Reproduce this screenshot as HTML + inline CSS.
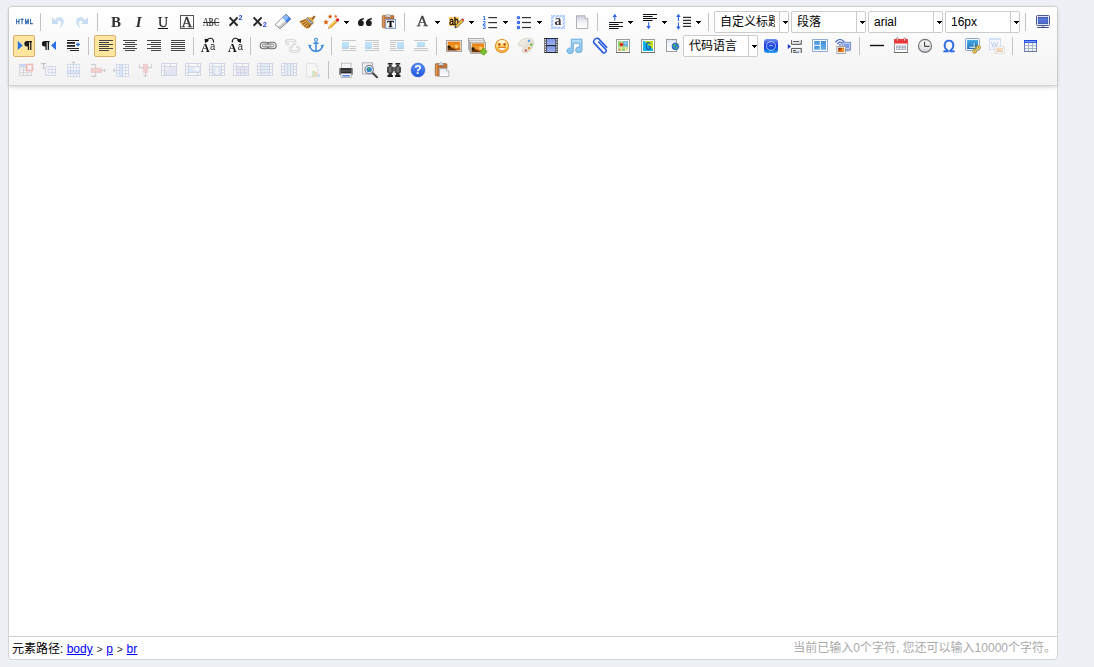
<!DOCTYPE html>
<html lang="zh-CN">
<head>
<meta charset="utf-8">
<title>UEditor</title>
<style>
html,body{margin:0;padding:0;}
body{background:#edf0f5;font-family:"Liberation Sans","Noto Sans CJK SC",sans-serif;font-size:12px;width:1094px;height:667px;overflow:hidden;position:relative;}
#ed{position:absolute;left:8px;top:6px;width:1048px;border:1px solid #d4d4d4;background:#fff;border-radius:4px;}
#tbo{position:relative;z-index:2;border-bottom:1px solid #d4d4d4;background:linear-gradient(to bottom,#ffffff,#f2f2f2);box-shadow:0 1px 4px rgba(0,0,0,0.065),0 1px 4px rgba(204,204,204,0.6);border-radius:3px 3px 0 0;}
#tbi{padding:2px;}
#tb{padding:1px;overflow:hidden;position:relative;}
#tb:after{content:"";display:block;clear:both;}
.b{float:left;margin:1px;padding:1px;height:20px;position:relative;}
.b .ic{display:block;float:left;width:20px;height:20px;will-change:transform;}
.b.chk{padding:0;border:1px solid #dcac6c;background:#ffe69f;border-radius:2px;}
.b.dis .ic{opacity:.3;}
.ar{float:left;width:9px;margin-left:1px;height:20px;position:relative;}
.ar i,.cba i{position:absolute;left:3px;top:9px;width:5px;height:1px;background:#000;}
.ar i:before,.cba i:before{content:"";position:absolute;left:1px;top:1px;width:3px;height:1px;background:#000;}
.ar i:after,.cba i:after{content:"";position:absolute;left:2px;top:2px;width:1px;height:1px;background:#000;}
.b.wide{margin-left:2px;}
.sep{float:left;width:1px;height:18px;margin:3px 4px 3px 4px;background:#c3c1c6;}
.cb{float:left;margin:1px;border:1px solid #ccc;background:#fff;border-radius:2px;height:20px;}
.cbt{float:left;width:55px;padding-left:5px;margin-right:4px;height:20px;line-height:20px;font-size:12px;white-space:nowrap;overflow:hidden;color:#000;}
.cba{float:left;width:8px;height:20px;position:relative;border-left:1px solid #ccc;}
#ifr{height:550px;background:#fff;}
#bot{border-top:1px solid #ccc;height:22px;line-height:20px;font-size:12px;position:relative;white-space:nowrap;}
#path{position:absolute;left:3px;top:2px;color:#000;}
#path i{font-style:normal;font-size:10.5px;color:#333;padding:0 .4px;}
#path span{color:#00f;text-decoration:underline;}
#wc{position:absolute;right:1px;top:1px;color:#aaa;}
</style>
</head>
<body>
<svg width="0" height="0" style="position:absolute"><defs>
<linearGradient id="gHtml" x1="0" y1="0" x2="0" y2="1"><stop offset="0" stop-color="#2a72b8"/><stop offset="1" stop-color="#0c3f86"/></linearGradient>
<pattern id="pHatch" width="2.4" height="2.4" patternUnits="userSpaceOnUse" patternTransform="rotate(-45)"><rect width="2.4" height="2.4" fill="#e8f1ff"/><rect width="2.4" height="1.1" fill="#8fb6ff"/></pattern>
<linearGradient id="gPage" x1="0" y1="0" x2="0" y2="1"><stop offset="0" stop-color="#c9cfdc"/><stop offset=".55" stop-color="#f4f5f8"/><stop offset="1" stop-color="#ffffff"/></linearGradient>
<linearGradient id="gScreen" x1="0" y1="0" x2="0" y2="1"><stop offset="0" stop-color="#3656c8"/><stop offset=".25" stop-color="#5a7ae0"/><stop offset="1" stop-color="#4a6ad2"/></linearGradient>
<linearGradient id="gImg" x1="0" y1="0" x2="0" y2="1"><stop offset="0" stop-color="#38b8ff"/><stop offset=".7" stop-color="#2aa0ee"/><stop offset="1" stop-color="#2070b8"/></linearGradient>
<linearGradient id="gSun" x1="0" y1="0" x2="0" y2="1"><stop offset="0" stop-color="#e07a14"/><stop offset=".5" stop-color="#f09a28"/><stop offset="1" stop-color="#b8500c"/></linearGradient>
<linearGradient id="gFace" x1="0" y1="0" x2="0" y2="1"><stop offset="0" stop-color="#fff6c8"/><stop offset=".5" stop-color="#ffe278"/><stop offset="1" stop-color="#fdb840"/></linearGradient>
<linearGradient id="gPal" x1="0" y1="0" x2="1" y2="1"><stop offset="0" stop-color="#f6f3ea"/><stop offset="1" stop-color="#d9d3c4"/></linearGradient>
<linearGradient id="gFilm" x1="0" y1="0" x2="0" y2="1"><stop offset="0" stop-color="#7f98e8"/><stop offset="1" stop-color="#9db0f0"/></linearGradient>
<linearGradient id="gPage2" x1="0" y1="0" x2="0" y2="1"><stop offset="0" stop-color="#e6e9f2"/><stop offset="1" stop-color="#ffffff"/></linearGradient>
<linearGradient id="gApp" x1="0" y1="0" x2="0" y2="1"><stop offset="0" stop-color="#7694f0"/><stop offset=".45" stop-color="#1c3edc"/><stop offset=".7" stop-color="#1658e0"/><stop offset="1" stop-color="#2aa6f2"/></linearGradient>
<linearGradient id="gTpl" x1="0" y1="0" x2="0" y2="1"><stop offset="0" stop-color="#3f8ed8"/><stop offset="1" stop-color="#6ab0ec"/></linearGradient>
<linearGradient id="gClock" x1="0" y1="0" x2="0" y2="1"><stop offset="0" stop-color="#ffffff"/><stop offset="1" stop-color="#d4d6da"/></linearGradient>
<linearGradient id="gSnap" x1="0" y1="0" x2="0" y2="1"><stop offset="0" stop-color="#44aee2"/><stop offset="1" stop-color="#1f6fb8"/></linearGradient>
<linearGradient id="gCell" x1="0" y1="0" x2="0" y2="1"><stop offset="0" stop-color="#cfd4f2"/><stop offset="1" stop-color="#b4b8e4"/></linearGradient>
<linearGradient id="gCell2" x1="0" y1="0" x2="0" y2="1"><stop offset="0" stop-color="#c2d8f6"/><stop offset="1" stop-color="#8fb4ea"/></linearGradient>
<linearGradient id="gHelp" x1="0" y1="0" x2="0" y2="1"><stop offset="0" stop-color="#5a90f4"/><stop offset="1" stop-color="#1f55dc"/></linearGradient>
<linearGradient id="gTblB" x1="0" y1="0" x2="0" y2="1"><stop offset="0" stop-color="#5878dc"/><stop offset="1" stop-color="#7484aa"/></linearGradient>
<linearGradient id="gClip" x1="0" y1="0" x2="1" y2="0"><stop offset="0" stop-color="#d08848"/><stop offset=".5" stop-color="#b86a30"/><stop offset="1" stop-color="#c47838"/></linearGradient>
<linearGradient id="gMusic" x1="0" y1="0" x2="0" y2="1"><stop offset="0" stop-color="#b4def6"/><stop offset="1" stop-color="#86c2ec"/></linearGradient>
<linearGradient id="gPbk" x1="0" y1="0" x2="1" y2="1"><stop offset="0" stop-color="#ffffff"/><stop offset="1" stop-color="#d4d8e0"/></linearGradient>
<linearGradient id="gSun2" x1="0" y1="0" x2="1" y2="1"><stop offset="0" stop-color="#7a2408"/><stop offset=".5" stop-color="#d85c10"/><stop offset="1" stop-color="#f09a20"/></linearGradient>
<!--DEFS-->
</defs></svg>
<div id="ed">
<div id="tbo"><div id="tbi"><div id="tb">
<div class="b"><svg class="ic" viewBox="0 0 20 20" width="20" height="20"><text transform="translate(1.9 12) scale(.7 1)" font-family="Liberation Sans, sans-serif" font-size="7.2" letter-spacing="1.5" fill="url(#gHtml)" stroke="#1a5aa2" stroke-width=".45">HTML</text></svg></div>
<div class="sep"></div>
<div class="b dis"><svg class="ic" viewBox="0 0 20 20" width="20" height="20"><path d="M5 5.2 L5 12 L11.8 12 Z" fill="#4f93dc"/><path d="M7.6 8.8 C9.5 4.6 14.6 3.4 16.4 7.6 C17.8 11 15.2 15 12.2 16.6 C14.2 13.6 14.6 11.2 13.6 9.6 C12.6 8.2 11.2 8.8 10.4 10.4 Z" fill="#5a9ee2"/></svg></div>
<div class="b dis"><svg class="ic" viewBox="0 0 20 20" width="20" height="20"><g transform="translate(22 0) scale(-1 1)"><path d="M5 5.2 L5 12 L11.8 12 Z" fill="#4f93dc"/><path d="M7.6 8.8 C9.5 4.6 14.6 3.4 16.4 7.6 C17.8 11 15.2 15 12.2 16.6 C14.2 13.6 14.6 11.2 13.6 9.6 C12.6 8.2 11.2 8.8 10.4 10.4 Z" fill="#5a9ee2"/></g></svg></div>
<div class="sep"></div>
<div class="b"><svg class="ic" viewBox="0 0 20 20" width="20" height="20"><text x="11.9" y="15" text-anchor="middle" font-family="Liberation Serif, serif" font-weight="bold" font-size="15" fill="#2e2e2e">B</text></svg></div>
<div class="b"><svg class="ic" viewBox="0 0 20 20" width="20" height="20"><text x="10.6" y="15" text-anchor="middle" font-family="Liberation Serif, serif" font-weight="bold" font-style="italic" font-size="15" fill="#2e2e2e">I</text></svg></div>
<div class="b"><svg class="ic" viewBox="0 0 20 20" width="20" height="20"><text x="11" y="14.6" text-anchor="middle" font-family="Liberation Serif, serif" font-size="14" fill="#222" stroke="#222" stroke-width=".25">U</text><rect x="6" y="16" width="10" height="1" fill="#111"/></svg></div>
<div class="b"><svg class="ic" viewBox="0 0 20 20" width="20" height="20"><rect x="4.5" y="3.5" width="13" height="13" fill="none" stroke="#555" stroke-width="1"/><text x="11" y="15" text-anchor="middle" font-family="Liberation Serif, serif" font-size="15" fill="#333" stroke="#333" stroke-width=".35">A</text></svg></div>
<div class="b"><svg class="ic" viewBox="0 0 20 20" width="20" height="20"><text x="3" y="13.6" font-family="Liberation Serif, serif" font-weight="bold" font-size="11.6" textLength="16.2" lengthAdjust="spacingAndGlyphs" fill="#555">ABC</text><rect x="3" y="10" width="16.4" height="1" fill="#333"/></svg></div>
<div class="b"><svg class="ic" viewBox="0 0 20 20" width="20" height="20"><path d="M5.6 5.4 L13.6 13.8 M13.6 5.4 L5.6 13.8" stroke="#2a2a2a" stroke-width="2" fill="none"/><text x="14.6" y="8" font-family="Liberation Sans, sans-serif" font-weight="bold" font-size="7.2" fill="#1c3fe0">2</text></svg></div>
<div class="b"><svg class="ic" viewBox="0 0 20 20" width="20" height="20"><path d="M5.6 5.4 L13.6 13.8 M13.6 5.4 L5.6 13.8" stroke="#2a2a2a" stroke-width="2" fill="none"/><text x="14.8" y="15.2" font-family="Liberation Sans, sans-serif" font-weight="bold" font-size="7.2" fill="#1c3fe0">2</text></svg></div>
<div class="b"><svg class="ic" viewBox="0 0 20 20" width="20" height="20"><polygon points="3.05,12.7 10.1,5.8 13.1,9.1 5.92,15.05" fill="#fafafa"/><polygon points="10.1,5.8 14,2.05 16.87,4.83 13.1,9.1" fill="#8cbcff"/><polygon points="5.92,15.05 13.1,9.1 15.2,10.9 8,16.75" fill="#cdcdcd"/><polygon points="13.1,9.1 16.87,4.83 18.95,6.85 15.2,10.9" fill="#3d80f2"/><polygon points="3.05,12.7 14,2.05 18.95,6.85 8,16.75" fill="none" stroke="#6a6a72" stroke-width=".7" stroke-linejoin="round"/></svg></div>
<div class="b"><svg class="ic" viewBox="0 0 20 20" width="20" height="20"><polygon points="10,6.6 3.2,9.2 5.2,11.8 7.4,14.2 10.2,16.6 12.8,16.2 16,12.4" fill="#d39a3e"/><path d="M9.4 8.2 L4.6 10 M10.6 9.6 L6.2 12.6 M12 10.8 L8.2 14.6 M13.4 11.8 L10.4 16 M14.8 12.4 L12.6 15.6" stroke="#9a571c" stroke-width="1.1" fill="none"/><path d="M10 9 L6 11.2 M11.4 10.4 L7.4 13.6 M12.8 11.4 L9.6 15.4" stroke="#eec46a" stroke-width=".6" fill="none"/><polygon points="11.4,5 15.4,5.2 17.6,8 17.6,11.6 16.4,12.4 10.4,6.4" fill="#e9b548"/><polygon points="9.8,6.8 11.4,5.2 17.4,11 15.8,12.8" fill="#6b7180"/><path d="M10.9 6.3 L16.4 11.7" stroke="#f1f4f9" stroke-width="1.1" stroke-dasharray="1 .85" fill="none"/><polygon points="15.2,6.6 18,3.4 19.6,4.8 16.8,8" fill="#94541c"/><path d="M16 6.8 L18.6 4" stroke="#c8853a" stroke-width=".8"/></svg></div>
<div class="b"><svg class="ic" viewBox="0 0 20 20" width="20" height="20"><polygon points="10.10,2.10 10.76,3.69 12.48,3.83 11.17,4.95 11.57,6.62 10.10,5.72 8.63,6.62 9.03,4.95 7.72,3.83 9.44,3.69" fill="#d85a00"/><polygon points="15.80,2.50 16.30,3.71 17.61,3.81 16.61,4.66 16.92,5.94 15.80,5.26 14.68,5.94 14.99,4.66 13.99,3.81 15.30,3.71" fill="#e06010"/><polygon points="6.00,7.30 6.77,9.14 8.76,9.30 7.24,10.60 7.70,12.55 6.00,11.50 4.30,12.55 4.76,10.60 3.24,9.30 5.23,9.14" fill="#d85a00"/><polygon points="8.2,16.6 8.8,14 15.6,7.6 17.8,9.6 10.8,16.2" fill="#f2b234"/><path d="M9.6 14.6 L16.2 8.4" stroke="#fbe08a" stroke-width=".9"/><path d="M10.4 15.6 L17.2 9.2" stroke="#c98718" stroke-width=".7"/><polygon points="8.2,16.6 8.8,14 10.8,16.2" fill="#e8cfa0"/><polygon points="8.2,16.6 8.5,15.4 9.4,16.3" fill="#444"/><polygon points="15,8.2 16.2,7 18.4,9 17.2,10.2" fill="#b8bcc4"/><circle cx="17.6" cy="7.9" r="1.6" fill="#e21c24"/></svg><span class="ar"><i></i></span></div>
<div class="b"><svg class="ic" viewBox="0 0 20 20" width="20" height="20"><circle cx="6.90" cy="11.2" r="2.85" fill="#1e1e1e"/><path d="M4.05 11.2 C4.05 8.2 6.30 6.3 9.90 6 L9.90 7.3 C8.30 7.8 7.30 8.6 7.20 9.8 Z" fill="#1e1e1e"/><circle cx="14.90" cy="11.2" r="2.85" fill="#1e1e1e"/><path d="M12.05 11.2 C12.05 8.2 14.30 6.3 17.90 6 L17.90 7.3 C16.30 7.8 15.30 8.6 15.20 9.8 Z" fill="#1e1e1e"/></svg></div>
<div class="b"><svg class="ic" viewBox="0 0 20 20" width="20" height="20"><rect x="4.3" y="3.4" width="11.6" height="12.4" rx="1.1" fill="url(#gClip)" stroke="#9a5a26" stroke-width=".7"/><rect x="5" y="4.6" width=".8" height="10.4" fill="#e8a868" opacity=".8"/><path d="M7.4 4.9 L7.9 3.2 L9.2 3.2 L9.4 2.2 L10.8 2.2 L11 3.2 L12.2 3.2 L12.7 4.9 Z" fill="#dfe2e8" stroke="#9a9ea8" stroke-width=".5"/><rect x="7.7" y="7.4" width="9.8" height="9" fill="#fff" stroke="#7c96cc" stroke-width="1"/><text x="9.3" y="14.9" font-family="Liberation Serif, serif" font-weight="bold" font-size="8.6" textLength="6.6" lengthAdjust="spacingAndGlyphs" fill="#0a0a0a" stroke="#0a0a0a" stroke-width=".3">T</text></svg></div>
<div class="sep"></div>
<div class="b"><svg class="ic" viewBox="0 0 20 20" width="20" height="20"><text x="11.4" y="14" text-anchor="middle" font-family="Liberation Serif, serif" font-size="15.6" fill="#444" stroke="#444" stroke-width=".4">A</text></svg><span class="ar"><i></i></span></div>
<div class="b"><svg class="ic" viewBox="0 0 20 20" width="20" height="20"><rect x="4" y="5" width="9.8" height="9" fill="#fdc463"/><text x="4.2" y="13" font-family="Liberation Sans, sans-serif" font-size="10.4" textLength="9.4" lengthAdjust="spacingAndGlyphs" fill="#000" stroke="#000" stroke-width=".3">ab</text><polygon points="9.8,15.8 10.6,13.2 16.6,7.2 18.6,9 12.4,15" fill="#f4c430" stroke="#3a3a3a" stroke-width=".7"/><polygon points="9.8,15.8 10.3,14 11.6,15.2" fill="#222"/><polygon points="16.6,7.2 17.6,6.2 19.4,8 18.6,9" fill="#e02a2a"/></svg><span class="ar"><i></i></span></div>
<div class="b"><svg class="ic" viewBox="0 0 20 20" width="20" height="20"><text x="3.6" y="7.6" font-family="Liberation Sans, sans-serif" font-weight="bold" font-size="6.2" fill="#2563eb">1</text><text x="3.6" y="12.6" font-family="Liberation Sans, sans-serif" font-weight="bold" font-size="6.2" fill="#2563eb">2</text><text x="3.6" y="17.4" font-family="Liberation Sans, sans-serif" font-weight="bold" font-size="6.2" fill="#2563eb">3</text><rect x="9.3" y="5" width="8.7" height="1.2" fill="#333"/><rect x="9.3" y="10" width="8.7" height="1.2" fill="#333"/><rect x="9.3" y="15" width="8.7" height="1.2" fill="#333"/></svg><span class="ar"><i></i></span></div>
<div class="b"><svg class="ic" viewBox="0 0 20 20" width="20" height="20"><circle cx="5.5" cy="5.6" r="1.1" fill="#a9c4ff" stroke="#2b5cf0" stroke-width="1.2"/><circle cx="5.5" cy="10.5" r="1.1" fill="#a9c4ff" stroke="#2b5cf0" stroke-width="1.2"/><circle cx="5.5" cy="15.5" r="1.1" fill="#a9c4ff" stroke="#2b5cf0" stroke-width="1.2"/><rect x="9" y="5" width="9" height="1.2" fill="#333"/><rect x="9" y="9.9" width="9" height="1.2" fill="#333"/><rect x="9" y="14.9" width="9" height="1.2" fill="#333"/></svg><span class="ar"><i></i></span></div>
<div class="b"><svg class="ic" viewBox="0 0 20 20" width="20" height="20"><rect x="4" y="3" width="14" height="14" fill="url(#pHatch)"/><rect x="6.4" y="5.4" width="9.2" height="9.2" fill="#fff"/><text x="11" y="13.1" text-anchor="middle" font-family="Liberation Serif, serif" font-weight="bold" font-size="14" fill="#3a3a3a">a</text></svg></div>
<div class="b"><svg class="ic" viewBox="0 0 20 20" width="20" height="20"><path d="M5.5 3.8 L14 3.8 L16.8 6.6 L16.8 16.6 L5.5 16.6 Z" fill="url(#gPage)" stroke="#a9a9ad" stroke-width=".9"/><path d="M14 3.8 L14 6.6 L16.8 6.6" fill="#fff" stroke="#a9a9ad" stroke-width=".8"/></svg></div>
<div class="sep"></div>
<div class="b"><svg class="ic" viewBox="0 0 20 20" width="20" height="20"><path d="M10.8 3.2 L10.8 8.6" stroke="#2a63e6" stroke-width="1.1"/><polygon points="10.8,1.8000000000000003 8.600000000000001,5.0 13.0,5.0" fill="#2a63e6"/><rect x="5" y="10" width="14" height="1" fill="#111"/><rect x="5" y="12" width="9.6" height="1" fill="#111"/><rect x="5" y="14" width="14" height="1" fill="#111"/><rect x="5" y="16" width="9.6" height="1" fill="#111"/></svg><span class="ar"><i></i></span></div>
<div class="b"><svg class="ic" viewBox="0 0 20 20" width="20" height="20"><rect x="5" y="2" width="14" height="1" fill="#111"/><rect x="5" y="4" width="9.6" height="1" fill="#111"/><rect x="5" y="6" width="14" height="1" fill="#111"/><rect x="5" y="8" width="9.6" height="1" fill="#111"/><path d="M10.6 10.2 L10.6 15.8" stroke="#2a63e6" stroke-width="1.1"/><polygon points="10.6,17.2 8.399999999999999,14.0 12.8,14.0" fill="#2a63e6"/></svg><span class="ar"><i></i></span></div>
<div class="b"><svg class="ic" viewBox="0 0 20 20" width="20" height="20"><path d="M6.4 3.2 L6.4 9" stroke="#2a63e6" stroke-width="1.1"/><polygon points="6.4,1.8000000000000003 4.2,5.0 8.600000000000001,5.0" fill="#2a63e6"/><path d="M6.4 10.6 L6.4 16.4" stroke="#2a63e6" stroke-width="1.1"/><polygon points="6.4,17.799999999999997 4.2,14.599999999999998 8.600000000000001,14.599999999999998" fill="#2a63e6"/><rect x="11" y="4.8" width="8" height="1.15" fill="#222"/><rect x="11" y="7.8" width="8" height="1.15" fill="#222"/><rect x="11" y="10.8" width="8" height="1.15" fill="#222"/><rect x="11" y="13.8" width="8" height="1.15" fill="#222"/></svg><span class="ar"><i></i></span></div>
<div class="sep"></div>
<div class="cb"><div class="cbt">自定义标题</div><div class="cba"><i></i></div></div>
<div class="cb"><div class="cbt">段落</div><div class="cba"><i></i></div></div>
<div class="cb"><div class="cbt">arial</div><div class="cba"><i></i></div></div>
<div class="cb"><div class="cbt">16px</div><div class="cba"><i></i></div></div>
<div class="sep"></div>
<div class="b"><svg class="ic" viewBox="0 0 20 20" width="20" height="20"><rect x="4.5" y="3.5" width="13" height="10" rx="1" fill="#f2f4fb" stroke="#4a5b94" stroke-width="1"/><rect x="6.2" y="5.2" width="9.6" height="6.6" fill="url(#gScreen)" stroke="#2b3f8f" stroke-width=".6"/><rect x="9.6" y="13.8" width="2.8" height="1.2" fill="#9aa4c4"/><rect x="5.2" y="15" width="11.6" height="1" fill="#3f4c7c"/></svg></div>
<div class="b chk"><svg class="ic" viewBox="0 0 20 20" width="20" height="20"><polygon points="3.8,5 8.8,9.5 3.8,14" fill="#2f6fe8"/><path d="M13.0 5 L18.0 5 L18.0 6.2 L17.4 6.2 L17.4 14 L16.1 14 L16.1 6.2 L15.1 6.2 L15.1 14 L13.799999999999999 14 L13.799999999999999 10.4 L13.0 10.4 A2.7 2.7 0 0 1 13.0 5 Z" fill="#1b1b1b"/></svg></div>
<div class="b"><svg class="ic" viewBox="0 0 20 20" width="20" height="20"><path d="M6.6 5 L11.6 5 L11.6 6.2 L11.0 6.2 L11.0 14 L9.7 14 L9.7 6.2 L8.7 6.2 L8.7 14 L7.4 14 L7.4 10.4 L6.6 10.4 A2.7 2.7 0 0 1 6.6 5 Z" fill="#1b1b1b"/><polygon points="18,5 13,9.5 18,14" fill="#2f6fe8"/></svg></div>
<div class="b"><svg class="ic" viewBox="0 0 20 20" width="20" height="20"><rect x="5" y="4" width="12" height="1" fill="#222"/><rect x="5" y="12" width="12" height="1" fill="#222"/><rect x="8" y="14" width="9" height="1" fill="#222"/><rect x="5" y="6" width="8" height="1.8" fill="#222"/><rect x="5" y="9" width="8" height="1.8" fill="#222"/><polygon points="13.8,7.8 15.6,7.8 15.2,6 18.3,8.5 15.2,11 15.6,9.2 13.8,9.2" fill="#2f6fe8"/></svg></div>
<div class="sep"></div>
<div class="b chk"><svg class="ic" viewBox="0 0 20 20" width="20" height="20"><rect x="4" y="4" width="14" height="1" fill="#444"/><rect x="4" y="6" width="10" height="1" fill="#444"/><rect x="4" y="8" width="14" height="1" fill="#444"/><rect x="4" y="10" width="10" height="1" fill="#444"/><rect x="4" y="12" width="14" height="1" fill="#444"/><rect x="4" y="14" width="10" height="1" fill="#444"/></svg></div>
<div class="b"><svg class="ic" viewBox="0 0 20 20" width="20" height="20"><rect x="4" y="4" width="14" height="1" fill="#444"/><rect x="6" y="6" width="10" height="1" fill="#444"/><rect x="4" y="8" width="14" height="1" fill="#444"/><rect x="6" y="10" width="10" height="1" fill="#444"/><rect x="4" y="12" width="14" height="1" fill="#444"/><rect x="6" y="14" width="10" height="1" fill="#444"/></svg></div>
<div class="b"><svg class="ic" viewBox="0 0 20 20" width="20" height="20"><rect x="4" y="4" width="14" height="1" fill="#444"/><rect x="8" y="6" width="10" height="1" fill="#444"/><rect x="4" y="8" width="14" height="1" fill="#444"/><rect x="8" y="10" width="10" height="1" fill="#444"/><rect x="4" y="12" width="14" height="1" fill="#444"/><rect x="8" y="14" width="10" height="1" fill="#444"/></svg></div>
<div class="b"><svg class="ic" viewBox="0 0 20 20" width="20" height="20"><rect x="4" y="4" width="14" height="1" fill="#444"/><rect x="4" y="6" width="14" height="1" fill="#444"/><rect x="4" y="8" width="14" height="1" fill="#444"/><rect x="4" y="10" width="14" height="1" fill="#444"/><rect x="4" y="12" width="14" height="1" fill="#444"/><rect x="4" y="14" width="14" height="1" fill="#444"/></svg></div>
<div class="sep"></div>
<div class="b"><svg class="ic" viewBox="0 0 20 20" width="20" height="20"><text x="5.3" y="16" text-anchor="middle" font-family="Liberation Serif, serif" font-weight="bold" font-size="12" fill="#111">A</text><text x="10" y="14" font-family="Liberation Sans, sans-serif" font-size="11.4" textLength="5.2" lengthAdjust="spacingAndGlyphs" fill="#222">a</text><path d="M13.6 6.4 C13.6 1.2 8.4 1.2 6.6 4.4" fill="none" stroke="#111" stroke-width="1.1"/><polygon points="4.6,2.8 8.8,3.4 8,5.4 5,7" fill="#111"/></svg></div>
<div class="b"><svg class="ic" viewBox="0 0 20 20" width="20" height="20"><text x="8.4" y="16" text-anchor="middle" font-family="Liberation Serif, serif" font-weight="bold" font-size="12" fill="#111">A</text><text x="13.8" y="14" font-family="Liberation Sans, sans-serif" font-size="11.4" textLength="5.2" lengthAdjust="spacingAndGlyphs" fill="#222">a</text><path d="M8.2 6.4 C8.2 1.2 13.4 1.2 15.2 4.4" fill="none" stroke="#111" stroke-width="1.1"/><polygon points="17.2,2.8 13,3.4 13.8,5.4 16.8,7" fill="#111"/></svg></div>
<div class="sep"></div>
<div class="b"><svg class="ic" viewBox="0 0 20 20" width="20" height="20"><rect x="3.2" y="6.2" width="8.8" height="6.6" rx="3.3" fill="#f6f6f6" stroke="#6c6c6c" stroke-width="1.1"/><rect x="10.4" y="6.2" width="8.8" height="6.6" rx="3.3" fill="#f6f6f6" stroke="#6c6c6c" stroke-width="1.1"/><rect x="5.4" y="8.1" width="11.4" height="2.8" rx="1.4" fill="#fff" stroke="#5c5c5c" stroke-width=".9"/><rect x="8" y="8.9" width="6.2" height="1.2" rx=".6" fill="#fff" stroke="#8a8a8a" stroke-width=".5"/></svg></div>
<div class="b dis"><svg class="ic" viewBox="0 0 20 20" width="20" height="20"><path d="M7 8.2 C4.4 8.2 4.4 4.4 7.2 4.4 L12 4.4 C14.8 4.4 14.8 8.2 12.2 8.2 M10.8 11 C8.4 11 8.4 15.4 11.2 15.4 L16 15.4 C18.8 15.4 18.8 11 16.4 11" fill="none" stroke="#808080" stroke-width="2.6" stroke-linecap="round"/><path d="M7 8.2 C4.4 8.2 4.4 4.4 7.2 4.4 L12 4.4 C14.8 4.4 14.8 8.2 12.2 8.2 M10.8 11 C8.4 11 8.4 15.4 11.2 15.4 L16 15.4 C18.8 15.4 18.8 11 16.4 11" fill="none" stroke="#fff" stroke-width="1" stroke-linecap="round"/></svg></div>
<div class="b"><svg class="ic" viewBox="0 0 20 20" width="20" height="20"><circle cx="11" cy="3.8" r="1.5" fill="#fff" stroke="#3b8ad8" stroke-width="1.1"/><path d="M11 5.4 L11 15.6 M8.4 7.2 L13.6 7.2" stroke="#3b8ad8" stroke-width="1.5" fill="none"/><path d="M4.2 9.6 C4.6 14 7.6 16.2 11 16.2 C14.4 16.2 17.6 14 18 9.6 L16.2 11 C15.6 13.2 13.6 14.4 11 14.4 C8.4 14.4 6.6 13.2 5.8 11 Z" fill="#3b8ad8"/><polygon points="3.2,8.6 6.8,9.2 4.4,12.2" fill="#3b8ad8"/><polygon points="19,8.6 15.4,9.2 17.8,12.2" fill="#3b8ad8"/></svg></div>
<div class="sep"></div>
<div class="b dis"><svg class="ic" viewBox="0 0 20 20" width="20" height="20"><rect x="4" y="4" width="14" height="1" fill="#555"/><rect x="4" y="14" width="14" height="1" fill="#555"/><rect x="12" y="10" width="6" height="1" fill="#555"/><rect x="12" y="12" width="6" height="1" fill="#555"/><rect x="4" y="6" width="7" height="7" fill="url(#gImg)"/></svg></div>
<div class="b dis"><svg class="ic" viewBox="0 0 20 20" width="20" height="20"><rect x="3" y="4" width="14" height="1" fill="#555"/><rect x="3" y="14" width="14" height="1" fill="#555"/><rect x="11" y="6" width="6" height="1" fill="#555"/><rect x="11" y="8" width="6" height="1" fill="#555"/><rect x="11" y="10" width="6" height="1" fill="#555"/><rect x="11" y="12" width="6" height="1" fill="#555"/><rect x="3" y="6" width="7" height="7" fill="url(#gImg)"/></svg></div>
<div class="b dis"><svg class="ic" viewBox="0 0 20 20" width="20" height="20"><rect x="4" y="4" width="14" height="1" fill="#555"/><rect x="4" y="14" width="14" height="1" fill="#555"/><rect x="4" y="6" width="6" height="1" fill="#555"/><rect x="4" y="8" width="6" height="1" fill="#555"/><rect x="4" y="10" width="6" height="1" fill="#555"/><rect x="4" y="12" width="6" height="1" fill="#555"/><rect x="11" y="6" width="7" height="7" fill="url(#gImg)"/></svg></div>
<div class="b dis"><svg class="ic" viewBox="0 0 20 20" width="20" height="20"><rect x="4" y="4" width="14" height="1" fill="#555"/><rect x="4" y="12" width="14" height="1" fill="#555"/><rect x="4" y="14" width="14" height="1" fill="#555"/><rect x="7" y="6" width="8" height="5" fill="url(#gImg)"/></svg></div>
<div class="sep"></div>
<div class="b wide"><svg class="ic" viewBox="0 0 20 20" width="20" height="20"><rect x="2.45" y="4.45" width="15.1" height="11.1" fill="#fff" stroke="#9b9b9b" stroke-width=".9"/><rect x="3.6" y="5.6" width="12.8" height="8.8" fill="url(#gSun)"/><circle cx="12.559999999999999" cy="10.440000000000001" r="1.7600000000000002" fill="#f8d070" opacity=".9"/><path d="M3.6 9.56 L13.200000000000001 14.4 L3.6 14.4 Z" fill="#5a2a08" opacity=".85"/><circle cx="5.136" cy="10.879999999999999" r="1.4080000000000001" fill="#2a1a10"/></svg></div>
<div class="b"><svg class="ic" viewBox="0 0 20 20" width="20" height="20"><rect x="0.5" y="2.5" width="15" height="11" fill="#fff" stroke="#a8a8a8" stroke-width=".9"/><rect x="1.5" y="4.2" width="15" height="11" fill="#fff" stroke="#a8a8a8" stroke-width=".9"/><rect x="2.45" y="6.25" width="15.1" height="11.1" fill="#fff" stroke="#9b9b9b" stroke-width=".9"/><rect x="3.6" y="7.4" width="12.8" height="8.8" fill="url(#gSun)"/><circle cx="12.559999999999999" cy="12.240000000000002" r="1.7600000000000002" fill="#f8d070" opacity=".9"/><path d="M3.6 11.360000000000001 L13.200000000000001 16.200000000000003 L3.6 16.200000000000003 Z" fill="#5a2a08" opacity=".85"/><circle cx="5.136" cy="12.68" r="1.4080000000000001" fill="#2a1a10"/><path d="M14.4 12.5 h2.2 v2.1 h2.1 v2.2 h-2.1 v2.1 h-2.2 v-2.1 h-2.1 v-2.2 h2.1 z" fill="#7cc325" stroke="#5a9e10" stroke-width=".5"/></svg></div>
<div class="b"><svg class="ic" viewBox="0 0 20 20" width="20" height="20"><circle cx="10" cy="10" r="6.55" fill="url(#gFace)" stroke="#e58a1c" stroke-width="1.1"/><ellipse cx="10" cy="5.6" rx="3.4" ry="1.5" fill="#fffbe6" opacity=".8"/><circle cx="7.4" cy="8.5" r="1.4" fill="#d2561a"/><circle cx="12.6" cy="8.5" r="1.4" fill="#d2561a"/><path d="M6.4 11.4 L13.6 11.4 C13.2 13.6 11.8 14.5 10 14.5 C8.2 14.5 6.8 13.6 6.4 11.4 Z" fill="#fff" stroke="#e07c1a" stroke-width=".7"/><path d="M5.9 11.2 L14.1 11.2" stroke="#e07818" stroke-width="1"/></svg></div>
<div class="b"><svg class="ic" viewBox="0 0 20 20" width="20" height="20"><path d="M2.4 8.6 C2.6 5.4 6.4 2.6 11.2 2.2 C15.6 1.8 18 4.4 17.4 8.2 C16.8 12 13.6 16.2 9.4 16.6 C6.6 16.8 5.6 15.2 6.8 13.2 C8 11.2 7.2 10 5.4 10.2 C3.6 10.4 2.4 10 2.4 8.6 Z" fill="url(#gPal)" stroke="#c9c2b4" stroke-width=".6"/><circle cx="12.9" cy="4.9" r="1.2" fill="#5aa0e8"/><circle cx="15.2" cy="8.6" r="1.2" fill="#58b838"/><circle cx="13" cy="12.2" r="1.15" fill="#f08a18"/><circle cx="9.8" cy="14.5" r="1.05" fill="#c83a2a"/></svg></div>
<div class="b"><svg class="ic" viewBox="0 0 20 20" width="20" height="20"><rect x="4.2" y="2" width="13.8" height="15" fill="#4e4e4e"/><rect x="4.2" y="2" width="13.8" height=".8" fill="#111"/><rect x="4.2" y="16.2" width="13.8" height=".8" fill="#111"/><rect x="6.5" y="2" width="9.2" height="15" fill="#151515"/><rect x="6.7" y="2.8" width="8.8" height="6.3" fill="url(#gFilm)"/><rect x="6.7" y="10.1" width="8.8" height="6" fill="url(#gFilm)"/><rect x="4.8" y="3.1" width="1.1" height="1.3" fill="#fff"/><rect x="16.3" y="3.1" width="1.1" height="1.3" fill="#fff"/><rect x="4.8" y="5.5" width="1.1" height="1.3" fill="#fff"/><rect x="16.3" y="5.5" width="1.1" height="1.3" fill="#fff"/><rect x="4.8" y="7.9" width="1.1" height="1.3" fill="#fff"/><rect x="16.3" y="7.9" width="1.1" height="1.3" fill="#fff"/><rect x="4.8" y="10.3" width="1.1" height="1.3" fill="#fff"/><rect x="16.3" y="10.3" width="1.1" height="1.3" fill="#fff"/><rect x="4.8" y="12.7" width="1.1" height="1.3" fill="#fff"/><rect x="16.3" y="12.7" width="1.1" height="1.3" fill="#fff"/><rect x="4.8" y="14.9" width="1.1" height="1.3" fill="#fff"/><rect x="16.3" y="14.9" width="1.1" height="1.3" fill="#fff"/></svg></div>
<div class="b"><svg class="ic" viewBox="0 0 20 20" width="20" height="20"><path d="M7.3 3.2 L18 3.2 L18 13.8 A3.2 2.7 0 1 1 15.7 11.3 L15.7 7.2 L9.3 7.2 L9.3 14.9 A3.2 2.7 0 1 1 7.3 12.4 Z" fill="url(#gMusic)" stroke="#62a6dc" stroke-width=".9" stroke-linejoin="round"/></svg></div>
<div class="b"><svg class="ic" viewBox="0 0 20 20" width="20" height="20"><g transform="translate(13.2 10.1) rotate(47) scale(-.94 1.08)"><path d="M5 -0.9 L-6 -0.9 A1.9 1.9 0 0 0 -6 2.9 L7 2.9 A2.9 2.9 0 0 0 7 -2.9 L-5 -2.9" fill="none" stroke="#2a5be0" stroke-width="1.5" stroke-linecap="round"/></g></svg></div>
<div class="b"><svg class="ic" viewBox="0 0 20 20" width="20" height="20"><rect x="4.5" y="3.5" width="13" height="13" fill="#fff" stroke="#9a9a9a" stroke-width="1"/><rect x="4" y="16" width="14" height="1" fill="#6e6e6e"/><rect x="6" y="5" width="10" height="10" fill="#8ed26a"/><rect x="11.4" y="5" width="4.6" height="5.4" fill="#6ab6ee"/><rect x="12.6" y="6" width="1.6" height="1.6" fill="#bfe0fa"/><rect x="6" y="11.4" width="10" height="1" fill="#f6ecb0"/><rect x="9" y="5" width="1" height="10" fill="#f6ecb0"/><rect x="13" y="10.4" width="1" height="4.6" fill="#f6ecb0"/><rect x="6" y="13" width="2.4" height="2" fill="#e8a070"/><rect x="13.8" y="12.6" width="2.2" height="2.4" fill="#f4e8a0"/><polygon points="9.5,6.4 11.6,8.6 9.5,10.8 7.4,8.6" fill="#e81c1c"/></svg></div>
<div class="b"><svg class="ic" viewBox="0 0 20 20" width="20" height="20"><rect x="5.5" y="3.5" width="13" height="13" fill="#fff" stroke="#9a9a9a" stroke-width="1"/><rect x="5" y="16" width="14" height="1" fill="#6e6e6e"/><rect x="7" y="5" width="10" height="10" fill="#13b3ee"/><polygon points="8.4,5 17,5 17,13.2" fill="#c3e016"/><text x="9.4" y="14" font-family="Liberation Sans, sans-serif" font-weight="bold" font-size="11" textLength="5.8" lengthAdjust="spacingAndGlyphs" fill="#14539e">G</text></svg></div>
<div class="b"><svg class="ic" viewBox="0 0 20 20" width="20" height="20"><rect x="6.5" y="3.5" width="10" height="12" fill="url(#gPage2)" stroke="#9c9c9c" stroke-width="1"/><rect x="7" y="4" width="9" height="1.6" fill="#dfe6f6"/><circle cx="15.4" cy="10.4" r="3.4" fill="#2f7fd6" stroke="#1c4f9a" stroke-width=".6"/><path d="M13 9.2 C14 7.6 15.6 8 15.4 9.4 C15.2 10.8 13.8 10.8 13 9.2 Z M15.8 11 C17 10.4 17.8 11.2 17.2 12.4 C16.4 13.2 15.6 12.4 15.8 11 Z M16.4 7.6 L17.8 8.8 L17 9.4 Z" fill="#58b848"/></svg></div>
<div class="cb"><div class="cbt">代码语言</div><div class="cba"><i></i></div></div>
<div class="b"><svg class="ic" viewBox="0 0 20 20" width="20" height="20"><rect x="3" y="3" width="14" height="14" rx="3" fill="url(#gApp)"/><circle cx="10" cy="10" r="4.5" fill="none" stroke="#d6e4ff" stroke-width=".8" opacity=".85"/><path d="M7.6 10.2 C8.4 8.7 11.6 8.7 12.4 10.2 L11.4 10.2 C10.8 9.7 9.2 9.7 8.6 10.2 Z" fill="#e0ebff" opacity=".9"/></svg></div>
<div class="b"><svg class="ic" viewBox="0 0 20 20" width="20" height="20"><polygon points="2.8,8 6,10.5 2.8,13" fill="#1b3ccc"/><rect x="7" y="4.2" width="9" height="3.8" fill="url(#gPbk)"/><rect x="7" y="12.8" width="9" height="4.2" fill="url(#gPbk)"/><path d="M6.6 4.1 L6.6 8.35 L16.3 8.35 L16.3 4.1" fill="none" stroke="#2c2c2c" stroke-width=".8"/><path d="M6.6 17 L6.6 12.45 L16.3 12.45 L16.3 17" fill="none" stroke="#2c2c2c" stroke-width=".8"/><rect x="8" y="5.1" width="6.2" height=".8" fill="#333"/><rect x="8" y="14.2" width="2.8" height=".8" fill="#222"/><rect x="8" y="15.8" width="4.6" height=".8" fill="#222"/><rect x="12.6" y="15.8" width="1.6" height=".8" fill="#2a5ad8"/></svg></div>
<div class="b"><svg class="ic" viewBox="0 0 20 20" width="20" height="20"><rect x="3.5" y="3.5" width="15" height="12" fill="#fff" stroke="#93abd3" stroke-width="1"/><rect x="5.2" y="5" width="5.6" height="4" fill="url(#gTpl)"/><rect x="5.2" y="9.8" width="5.6" height="4" fill="url(#gTpl)"/><rect x="11.8" y="5" width="5.2" height="8.8" fill="url(#gTpl)"/></svg></div>
<div class="b"><svg class="ic" viewBox="0 0 20 20" width="20" height="20"><path d="M2.8 5.8 Q7 1.2 11.2 5.8 M4.6 7.6 Q7 4.6 9.4 7.6" fill="none" stroke="#3a5ec8" stroke-width="1.2" stroke-linecap="round"/><circle cx="7" cy="8.8" r=".9" fill="#3a5ec8"/><rect x="9.2" y="6.4" width="8.4" height="7" fill="#c4d4f6" stroke="#7a92cc" stroke-width="1"/><rect x="10.6" y="7.8" width="5.6" height="4.2" fill="#7f9eea"/><rect x="12.6" y="13.6" width="2" height="1" fill="#8a9cc8"/><rect x="10.8" y="14.4" width="6.8" height=".9" fill="#7a8cbc"/><rect x="3.9" y="10.4" width="8.6" height="7" fill="#fff" stroke="#9a9a9a" stroke-width=".9"/><rect x="5.2" y="11.7" width="6" height="4.4" fill="url(#gSun2)"/><circle cx="9.6" cy="13.6" r="1.1" fill="#f8c040" opacity=".85"/></svg></div>
<div class="sep"></div>
<div class="b"><svg class="ic" viewBox="0 0 20 20" width="20" height="20"><rect x="4" y="8.8" width="14" height="1.4" fill="#111"/></svg></div>
<div class="b"><svg class="ic" viewBox="0 0 20 20" width="20" height="20"><rect x="4.5" y="3.5" width="13" height="13" rx=".8" fill="#fff" stroke="#8c8c8c" stroke-width="1"/><rect x="4" y="16" width="14" height="1" fill="#6e6e6e"/><path d="M4 3.8 Q4 3 4.8 3 L17.2 3 Q18 3 18 3.8 L18 8 L4 8 Z" fill="#e8383a"/><rect x="4" y="7.2" width="14" height=".9" fill="#f8a0a0"/><rect x="6.6" y="1.8" width="1.5" height="3.2" rx=".7" fill="#f4f4f4" stroke="#b02020" stroke-width=".5"/><rect x="13.9" y="1.8" width="1.5" height="3.2" rx=".7" fill="#f4f4f4" stroke="#b02020" stroke-width=".5"/><rect x="6.2" y="9.6" width="9.8" height="4.2" fill="#8f9bb0"/><rect x="6.9" y="10.3" width="2.4" height="1.2" fill="#e6ebf3"/><rect x="6.9" y="12" width="2.4" height="1.2" fill="#e6ebf3"/><rect x="9.9" y="10.3" width="2.4" height="1.2" fill="#e6ebf3"/><rect x="9.9" y="12" width="2.4" height="1.2" fill="#e6ebf3"/><rect x="12.9" y="10.3" width="2.4" height="1.2" fill="#e6ebf3"/><rect x="12.9" y="12" width="2.4" height="1.2" fill="#e6ebf3"/></svg></div>
<div class="b"><svg class="ic" viewBox="0 0 20 20" width="20" height="20"><circle cx="11" cy="9.9" r="6.5" fill="url(#gClock)" stroke="#757575" stroke-width="1.1"/><path d="M11 4.4 L11 5.4 M11 14.4 L11 15.4 M5.5 9.9 L6.5 9.9 M15.5 9.9 L16.5 9.9" stroke="#999" stroke-width=".7"/><path d="M10.6 5.8 L10.6 10.3 L15.4 10.3" fill="none" stroke="#222" stroke-width=".95"/></svg></div>
<div class="b"><svg class="ic" viewBox="0 0 20 20" width="20" height="20"><text x="11.1" y="15.8" text-anchor="middle" font-family="Liberation Sans, sans-serif" font-size="16" fill="#2a6ae8" stroke="#2a6ae8" stroke-width=".5">Ω</text></svg></div>
<div class="b"><svg class="ic" viewBox="0 0 20 20" width="20" height="20"><rect x="3.5" y="2.5" width="14" height="12" rx="1.2" fill="#f4f7fd" stroke="#8aa2cc" stroke-width="1"/><rect x="5.1" y="4" width="10.9" height="9" fill="url(#gSnap)"/><path d="M7.4 11.25 L12.3 11.25 L12.3 6.9" fill="none" stroke="#f2f9ff" stroke-width="1.15"/><path d="M13 7 L13 10.6" stroke="#145a96" stroke-width=".6"/><path d="M12.8 10.8 L15 12.8 M13.2 11.6 L12.8 13.4" stroke="#c8a838" stroke-width="1"/><circle cx="16.5" cy="11.5" r="2" fill="#f4dc78" stroke="#ae8e24" stroke-width=".9"/><circle cx="16.6" cy="11.3" r=".6" fill="#8a6a10"/><circle cx="12.6" cy="15.3" r="2" fill="#f4dc78" stroke="#ae8e24" stroke-width=".9"/><circle cx="12.6" cy="15.2" r=".6" fill="#8a6a10"/></svg></div>
<div class="b dis"><svg class="ic" viewBox="0 0 20 20" width="20" height="20"><rect x="3.5" y="2.5" width="11" height="11" fill="#f2f7ff" stroke="#7aa4e6" stroke-width="1.1"/><rect x="3" y="2" width="12" height="1.9" fill="#7aa8f0"/><text x="5" y="10.6" font-family="Liberation Sans, sans-serif" font-size="7.6" textLength="7.4" lengthAdjust="spacingAndGlyphs" fill="#4a86d8" stroke="#4a86d8" stroke-width=".3">W</text><rect x="8.7" y="10.7" width="9.6" height="6.6" fill="#fff" stroke="#9a9a9a" stroke-width=".9"/><rect x="10.2" y="12.1" width="6.8" height="3.9" fill="url(#gSun)"/></svg></div>
<div class="sep"></div>
<div class="b"><svg class="ic" viewBox="0 0 20 20" width="20" height="20"><rect x="5" y="4" width="13" height="12" fill="url(#gTblB)"/><rect x="6" y="6.8" width="11" height="8.2" fill="#aab6ca"/><rect x="5" y="4" width="13" height="2.8" rx=".5" fill="#2348e0"/><rect x="6" y="5.2" width="11" height=".9" fill="#8fb4ff"/><rect x="6" y="7.3" width="3" height="1.7" fill="#fff"/><rect x="6" y="10.2" width="3" height="1.7" fill="#fff"/><rect x="6" y="13.1" width="3" height="1.7" fill="#fff"/><rect x="10" y="7.3" width="3" height="1.7" fill="#fff"/><rect x="10" y="10.2" width="3" height="1.7" fill="#fff"/><rect x="10" y="13.1" width="3" height="1.7" fill="#fff"/><rect x="14" y="7.3" width="3" height="1.7" fill="#fff"/><rect x="14" y="10.2" width="3" height="1.7" fill="#fff"/><rect x="14" y="13.1" width="3" height="1.7" fill="#fff"/><rect x="5" y="15" width="13" height="1" fill="#6878a8"/></svg></div>
<div class="b dis"><svg class="ic" viewBox="0 0 20 20" width="20" height="20"><rect x="5" y="4" width="13" height="12" fill="#8c8c9c"/><rect x="6.00" y="5.00" width="3.00" height="1.75" fill="#fff"/><rect x="6.00" y="7.75" width="3.00" height="1.75" fill="#fff"/><rect x="6.00" y="10.50" width="3.00" height="1.75" fill="#fff"/><rect x="6.00" y="13.25" width="3.00" height="1.75" fill="#fff"/><rect x="10.00" y="5.00" width="3.00" height="1.75" fill="#fff"/><rect x="10.00" y="7.75" width="3.00" height="1.75" fill="#fff"/><rect x="10.00" y="10.50" width="3.00" height="1.75" fill="#fff"/><rect x="10.00" y="13.25" width="3.00" height="1.75" fill="#fff"/><rect x="14.00" y="5.00" width="3.00" height="1.75" fill="#fff"/><rect x="14.00" y="7.75" width="3.00" height="1.75" fill="#fff"/><rect x="14.00" y="10.50" width="3.00" height="1.75" fill="#fff"/><rect x="14.00" y="13.25" width="3.00" height="1.75" fill="#fff"/><rect x="5" y="4" width="13" height="2.6" fill="#6a88e8"/><rect x="12" y="4" width="7" height="7" fill="#e8474a" stroke="#d02a2e" stroke-width=".6"/><path d="M13.6 5.6 L17.4 9.4 M17.4 5.6 L13.6 9.4" stroke="#fff" stroke-width="1.6"/></svg></div>
<div class="b dis"><svg class="ic" viewBox="0 0 20 20" width="20" height="20"><path d="M3 3.6 L8 3.6 M5.5 3.6 L5.5 8.8 M4.6 8.8 L6.4 8.8" stroke="#555" stroke-width="1.1" fill="none"/><rect x="7" y="6" width="11" height="10" fill="#8a9ccc"/><rect x="8.00" y="7.00" width="2.33" height="2.00" fill="#fff"/><rect x="8.00" y="10.00" width="2.33" height="2.00" fill="#fff"/><rect x="8.00" y="13.00" width="2.33" height="2.00" fill="#fff"/><rect x="11.33" y="7.00" width="2.33" height="2.00" fill="#fff"/><rect x="11.33" y="10.00" width="2.33" height="2.00" fill="#fff"/><rect x="11.33" y="13.00" width="2.33" height="2.00" fill="#fff"/><rect x="14.67" y="7.00" width="2.33" height="2.00" fill="#fff"/><rect x="14.67" y="10.00" width="2.33" height="2.00" fill="#fff"/><rect x="14.67" y="13.00" width="2.33" height="2.00" fill="#fff"/><rect x="8" y="7" width="2.4" height="8" fill="#dfe6f8"/></svg></div>
<div class="b dis"><svg class="ic" viewBox="0 0 20 20" width="20" height="20"><rect x="5" y="4" width="13" height="13" fill="#8aa0dc"/><rect x="6.00" y="5.00" width="2.00" height="2.00" fill="#fff"/><rect x="6.00" y="8.00" width="2.00" height="2.00" fill="#fff"/><rect x="6.00" y="11.00" width="2.00" height="2.00" fill="#fff"/><rect x="6.00" y="14.00" width="2.00" height="2.00" fill="#fff"/><rect x="9.00" y="5.00" width="2.00" height="2.00" fill="#fff"/><rect x="9.00" y="8.00" width="2.00" height="2.00" fill="#fff"/><rect x="9.00" y="11.00" width="2.00" height="2.00" fill="#fff"/><rect x="9.00" y="14.00" width="2.00" height="2.00" fill="#fff"/><rect x="12.00" y="5.00" width="2.00" height="2.00" fill="#fff"/><rect x="12.00" y="8.00" width="2.00" height="2.00" fill="#fff"/><rect x="12.00" y="11.00" width="2.00" height="2.00" fill="#fff"/><rect x="12.00" y="14.00" width="2.00" height="2.00" fill="#fff"/><rect x="15.00" y="5.00" width="2.00" height="2.00" fill="#fff"/><rect x="15.00" y="8.00" width="2.00" height="2.00" fill="#fff"/><rect x="15.00" y="11.00" width="2.00" height="2.00" fill="#fff"/><rect x="15.00" y="14.00" width="2.00" height="2.00" fill="#fff"/><rect x="5" y="10.4" width="13" height="3.2" fill="#6a9ae6"/><rect x="6" y="11.3" width="11" height="1.4" fill="#a8c4f4"/><path d="M11.4 1.6 L11.4 5.4 M9.6 3.2 L11.4 1.4 L13.2 3.2" stroke="#666" stroke-width="1" fill="none"/></svg></div>
<div class="b dis"><svg class="ic" viewBox="0 0 20 20" width="20" height="20"><path d="M5 4.6 L9.6 4.6 L9.6 16.4 L5 16.4" fill="none" stroke="#777" stroke-width="1.1"/><rect x="5" y="8.2" width="10.8" height="4.4" fill="#e8777c" stroke="#d0555a" stroke-width=".6"/><path d="M15.8 10.4 L19.4 10.4 M17.8 8.8 L19.6 10.4 L17.8 12" stroke="#666" stroke-width="1" fill="none"/></svg></div>
<div class="b dis"><svg class="ic" viewBox="0 0 20 20" width="20" height="20"><rect x="6" y="4" width="13" height="13" fill="#8aa0dc"/><rect x="7.00" y="5.00" width="2.00" height="2.00" fill="#fff"/><rect x="7.00" y="8.00" width="2.00" height="2.00" fill="#fff"/><rect x="7.00" y="11.00" width="2.00" height="2.00" fill="#fff"/><rect x="7.00" y="14.00" width="2.00" height="2.00" fill="#fff"/><rect x="10.00" y="5.00" width="2.00" height="2.00" fill="#fff"/><rect x="10.00" y="8.00" width="2.00" height="2.00" fill="#fff"/><rect x="10.00" y="11.00" width="2.00" height="2.00" fill="#fff"/><rect x="10.00" y="14.00" width="2.00" height="2.00" fill="#fff"/><rect x="13.00" y="5.00" width="2.00" height="2.00" fill="#fff"/><rect x="13.00" y="8.00" width="2.00" height="2.00" fill="#fff"/><rect x="13.00" y="11.00" width="2.00" height="2.00" fill="#fff"/><rect x="13.00" y="14.00" width="2.00" height="2.00" fill="#fff"/><rect x="16.00" y="5.00" width="2.00" height="2.00" fill="#fff"/><rect x="16.00" y="8.00" width="2.00" height="2.00" fill="#fff"/><rect x="16.00" y="11.00" width="2.00" height="2.00" fill="#fff"/><rect x="16.00" y="14.00" width="2.00" height="2.00" fill="#fff"/><rect x="9" y="4" width="3.6" height="13" fill="#6a9ae6"/><rect x="10" y="5" width="1.6" height="11" fill="#a8c4f4"/><path d="M3.2 10.4 L7.6 10.4 M4.8 8.8 L3 10.4 L4.8 12" stroke="#666" stroke-width="1" fill="none"/></svg></div>
<div class="b dis"><svg class="ic" viewBox="0 0 20 20" width="20" height="20"><path d="M5.4 4.2 L5.4 7.6 L17.4 7.6 L17.4 4.2" fill="none" stroke="#777" stroke-width="1.1"/><rect x="9.2" y="4.2" width="4.6" height="8.4" fill="#e8777c" stroke="#d0555a" stroke-width=".6"/><path d="M11.5 12.6 L11.5 16.8 M9.9 15.2 L11.5 17 L13.1 15.2" stroke="#666" stroke-width="1" fill="none"/></svg></div>
<div class="b dis"><svg class="ic" viewBox="0 0 20 20" width="20" height="20"><rect x="3" y="3" width="16" height="13" fill="#7f93c8"/><rect x="4" y="4" width="2" height="2" fill="#fff"/><rect x="4" y="7" width="2" height="3" fill="#fff"/><rect x="4" y="11" width="2" height="4" fill="#fff"/><rect x="7" y="4" width="5" height="2" fill="#fff"/><rect x="13" y="4" width="5" height="2" fill="#fff"/><rect x="7" y="7" width="11" height="8" fill="url(#gCell)"/></svg></div>
<div class="b dis"><svg class="ic" viewBox="0 0 20 20" width="20" height="20"><rect x="3" y="3" width="16" height="13" fill="#7f93c8"/><rect x="4" y="4" width="2" height="2" fill="#fff"/><rect x="4" y="7" width="2" height="2" fill="#fff"/><rect x="4" y="10" width="2" height="2" fill="#fff"/><rect x="4" y="13" width="2" height="2" fill="#fff"/><rect x="16" y="4" width="2" height="2" fill="#fff"/><rect x="16" y="13" width="2" height="2" fill="#fff"/><rect x="7" y="4" width="8" height="2" fill="#fff"/><rect x="7" y="13" width="8" height="2" fill="#fff"/><rect x="7" y="7" width="11" height="5" fill="url(#gCell2)"/><path d="M11 9.5 L16.4 9.5 M14.4 7.6 L16.6 9.5 L14.4 11.4" stroke="#fff" stroke-width="1.3" fill="none"/></svg></div>
<div class="b dis"><svg class="ic" viewBox="0 0 20 20" width="20" height="20"><rect x="3" y="3" width="16" height="13" fill="#7f93c8"/><rect x="4" y="4" width="2" height="2" fill="#fff"/><rect x="4" y="7" width="2" height="2" fill="#fff"/><rect x="4" y="10" width="2" height="2" fill="#fff"/><rect x="4" y="13" width="2" height="2" fill="#fff"/><rect x="16" y="4" width="2" height="2" fill="#fff"/><rect x="16" y="7" width="2" height="2" fill="#fff"/><rect x="16" y="10" width="2" height="2" fill="#fff"/><rect x="16" y="13" width="2" height="2" fill="#fff"/><rect x="7" y="4" width="8" height="2" fill="#fff"/><rect x="7" y="7" width="8" height="8" fill="url(#gCell2)"/><path d="M11 7.6 L11 13.6 M9 11.6 L11 13.8 L13 11.6" stroke="#fff" stroke-width="1.3" fill="none"/></svg></div>
<div class="b dis"><svg class="ic" viewBox="0 0 20 20" width="20" height="20"><rect x="3" y="3" width="16" height="13" fill="#8a90c8"/><rect x="4" y="4" width="2" height="2" fill="#fff"/><rect x="4" y="7" width="2" height="2" fill="#fff"/><rect x="4" y="10" width="2" height="5" fill="#fff"/><rect x="7" y="4" width="5" height="2" fill="#fff"/><rect x="13" y="4" width="5" height="2" fill="#fff"/><rect x="7" y="7" width="3" height="2" fill="#c4c8ec"/><rect x="11" y="7" width="3" height="2" fill="#c4c8ec"/><rect x="15" y="7" width="3" height="2" fill="#c4c8ec"/><rect x="7" y="10" width="3" height="2" fill="#c4c8ec"/><rect x="11" y="10" width="3" height="2" fill="#c4c8ec"/><rect x="15" y="10" width="3" height="2" fill="#c4c8ec"/><rect x="7" y="13" width="3" height="2" fill="#c4c8ec"/><rect x="11" y="13" width="3" height="2" fill="#c4c8ec"/><rect x="15" y="13" width="3" height="2" fill="#c4c8ec"/></svg></div>
<div class="b dis"><svg class="ic" viewBox="0 0 20 20" width="20" height="20"><rect x="3" y="3" width="16" height="13" fill="#7f93c8"/><rect x="4" y="4" width="2" height="2" fill="#fff"/><rect x="4" y="7" width="2" height="2" fill="#fff"/><rect x="4" y="10" width="2" height="2" fill="#fff"/><rect x="4" y="13" width="2" height="2" fill="#fff"/><rect x="16" y="4" width="2" height="2" fill="#fff"/><rect x="16" y="7" width="2" height="2" fill="#fff"/><rect x="16" y="10" width="2" height="2" fill="#fff"/><rect x="16" y="13" width="2" height="2" fill="#fff"/><rect x="7" y="4" width="8" height="2" fill="#bcd4f6"/><rect x="7" y="7" width="8" height="2" fill="#bcd4f6"/><rect x="7" y="10" width="8" height="2" fill="#bcd4f6"/><rect x="7" y="13" width="8" height="2" fill="#bcd4f6"/></svg></div>
<div class="b dis"><svg class="ic" viewBox="0 0 20 20" width="20" height="20"><rect x="3" y="3" width="16" height="13" fill="#7f93c8"/><rect x="4" y="4" width="2" height="2" fill="#fff"/><rect x="4" y="7" width="2" height="2" fill="#fff"/><rect x="4" y="10" width="2" height="2" fill="#fff"/><rect x="4" y="13" width="2" height="2" fill="#fff"/><rect x="16" y="4" width="2" height="2" fill="#fff"/><rect x="16" y="7" width="2" height="2" fill="#fff"/><rect x="16" y="10" width="2" height="2" fill="#fff"/><rect x="16" y="13" width="2" height="2" fill="#fff"/><rect x="7" y="4" width="2" height="11" fill="#bcd4f6"/><rect x="10" y="4" width="2" height="11" fill="#bcd4f6"/><rect x="13" y="4" width="2" height="11" fill="#bcd4f6"/></svg></div>
<div class="b dis"><svg class="ic" viewBox="0 0 20 20" width="20" height="20"><path d="M4.6 3.4 L13 3.4 L16 6.4 L16 16.8 L4.6 16.8 Z" fill="#fdfdfd" stroke="#b0b0b0" stroke-width=".9"/><path d="M13 3.4 L13 6.4 L16 6.4" fill="#f0f0f0" stroke="#b0b0b0" stroke-width=".8"/><rect x="10.3" y="10.8" width="2.6" height="6.2" fill="#7cc04a"/><rect x="13" y="12" width="2.5" height="5" fill="#f0a050"/><rect x="15.6" y="14" width="2.4" height="3" fill="#6ab4e8"/></svg></div>
<div class="sep"></div>
<div class="b"><svg class="ic" viewBox="0 0 20 20" width="20" height="20"><rect x="6.4" y="3.2" width="9.6" height="5.6" fill="#f4f4f6" stroke="#b4b4b8" stroke-width=".8"/><rect x="4" y="8" width="14" height="7" rx="1" fill="#8a8a8e"/><rect x="5.6" y="8.2" width="10.8" height="5.6" fill="#2a2a2c"/><rect x="5.6" y="10.4" width="10.8" height="1" fill="#6a6a6e"/><rect x="6" y="13.4" width="10.2" height="4.2" fill="#fafafa" stroke="#9a9a9e" stroke-width=".7"/><rect x="7.4" y="15.2" width="7.4" height="1.2" fill="#2a62e6"/></svg></div>
<div class="b"><svg class="ic" viewBox="0 0 20 20" width="20" height="20"><rect x="3.4" y="2.8" width="10.2" height="11.2" fill="#eef0f6" stroke="#a8aab4" stroke-width=".9"/><path d="M13.4 12.8 L18 17.2" stroke="#4a4a4a" stroke-width="2.2" stroke-linecap="round"/><circle cx="10.2" cy="9.6" r="4.2" fill="#e8f2fc" stroke="#8a8a8e" stroke-width="1.3"/><circle cx="10.2" cy="9.6" r="2.7" fill="#2f7fd6"/><path d="M8.6 8.4 C9.6 7.2 11 7.8 10.6 9 C10.2 10.2 9 10 8.6 8.4 Z M10.8 10.4 C11.8 10 12.4 10.8 11.8 11.6 C11 12 10.6 11.4 10.8 10.4 Z" fill="#5ab848"/></svg></div>
<div class="b"><svg class="ic" viewBox="0 0 20 20" width="20" height="20"><rect x="4.7" y="3" width="5" height="1.6" rx=".7" fill="#1f1f1f"/><rect x="5.8" y="4.4" width="2.8" height="2.6" fill="#3a3a3a"/><rect x="4.0" y="6.4" width="6.4" height="6.6" rx="1.2" fill="#484848"/><rect x="6.1" y="7" width="2.2" height="5.4" fill="#737373"/><rect x="5.5" y="12.6" width="3.4" height="2.8" fill="#333"/><rect x="4.3" y="15" width="5.8" height="2" rx=".9" fill="#1a1a1a"/><rect x="12.3" y="3" width="5" height="1.6" rx=".7" fill="#1f1f1f"/><rect x="13.4" y="4.4" width="2.8" height="2.6" fill="#3a3a3a"/><rect x="11.6" y="6.4" width="6.4" height="6.6" rx="1.2" fill="#484848"/><rect x="13.7" y="7" width="2.2" height="5.4" fill="#737373"/><rect x="13.1" y="12.6" width="3.4" height="2.8" fill="#333"/><rect x="11.9" y="15" width="5.8" height="2" rx=".9" fill="#1a1a1a"/><rect x="9.8" y="7.2" width="2.4" height="3.8" fill="#5e5e5e"/></svg></div>
<div class="b"><svg class="ic" viewBox="0 0 20 20" width="20" height="20"><circle cx="11" cy="10" r="6.9" fill="url(#gHelp)" stroke="#2a5ad0" stroke-width=".6"/><text x="11" y="14.4" text-anchor="middle" font-family="Liberation Sans, sans-serif" font-weight="bold" font-size="12" fill="#fff">?</text></svg></div>
<div class="b"><svg class="ic" viewBox="0 0 20 20" width="20" height="20"><rect x="4.3" y="3.6" width="11.6" height="12.4" rx="1.1" fill="url(#gClip)" stroke="#9a5a26" stroke-width=".7"/><rect x="5" y="4.8" width=".8" height="10.4" fill="#e8a868" opacity=".8"/><path d="M7.4 5.1 L7.9 3.4 L9.2 3.4 L9.4 2.4 L10.8 2.4 L11 3.4 L12.2 3.4 L12.7 5.1 Z" fill="#dfe2e8" stroke="#9a9ea8" stroke-width=".5"/><path d="M8.4 8.4 L15.4 8.4 L17.8 10.8 L17.8 16.6 L8.4 16.6 Z" fill="url(#gPage2)" stroke="#a6a8b0" stroke-width=".8"/><path d="M15.4 8.4 L15.4 10.8 L17.8 10.8" fill="#fff" stroke="#a6a8b0" stroke-width=".7"/></svg></div>
</div></div></div>
<div id="ifr"></div>
<div id="bot"><div id="path">元素路径: <span>body</span> <i>&gt;</i> <span>p</span> <i>&gt;</i> <span>br</span></div><div id="wc">当前已输入0个字符, 您还可以输入10000个字符。</div></div>
</div>
</body>
</html>
